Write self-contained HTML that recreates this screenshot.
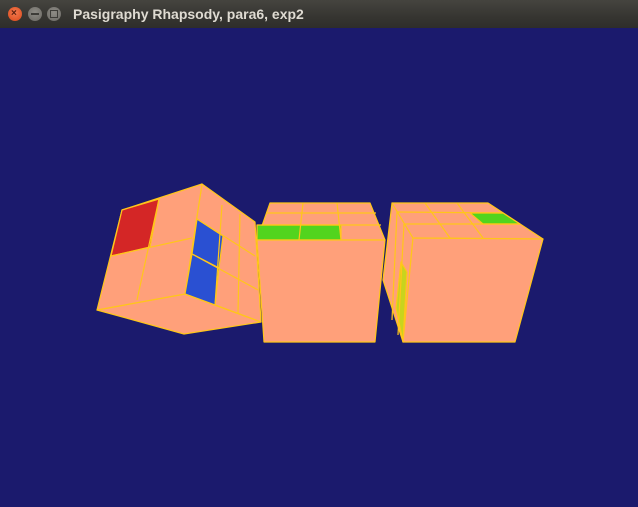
<!DOCTYPE html>
<html><head><style>
html,body{margin:0;padding:0;width:638px;height:507px;overflow:hidden;background:#1b1a6d}
#tb{position:absolute;left:0;top:0;width:638px;height:28px;background:linear-gradient(#45443f,#363531 60%,#2e2d2a);}
#t{position:absolute;left:73px;top:6px;font:bold 14px "Liberation Sans",sans-serif;color:#dfdbd2}
.b{position:absolute;top:7px;width:14px;height:14px;border-radius:50%}
</style></head><body>
<div id="tb">
<div class="b" style="left:8px;background:radial-gradient(circle at 50% 40%,#f37a4f,#d9481a);"></div>
<div class="b" style="left:28px;background:radial-gradient(circle at 50% 40%,#8e8c86,#6a6863);"></div>
<div class="b" style="left:47px;background:radial-gradient(circle at 50% 40%,#8e8c86,#6a6863);"></div>
<div style="position:absolute;left:11px;top:8px;font:bold 10px 'Liberation Sans',sans-serif;color:#5a2010">×</div>
<div style="position:absolute;left:31px;top:13px;width:8px;height:2px;background:#3d3c38"></div>
<div style="position:absolute;left:50px;top:10px;width:6px;height:6px;border:1px solid #3d3c38"></div>
<div id="t">Pasigraphy Rhapsody, para6, exp2</div>
</div>
<svg width="638" height="507" style="position:absolute;left:0;top:0" stroke="#ffc61a" stroke-width="1.2" stroke-linejoin="round">
<polygon points="97,310 185,294 261,322 184,334" fill="#ffa07a"/>
<polygon points="202,184 255,222 261,322 185,294" fill="#ffa07a"/>
<polygon points="122,210 202,184 185,294 97,310" fill="#ffa07a"/>
<polygon points="122,210 159,199 150,247 111,256" fill="#d42626"/>
<polygon points="197,219 223,236 219,268 192,254" fill="#2a50d2"/>
<polygon points="192,254 219,268 215,305 185,294" fill="#2a50d2"/>
<line x1="159" y1="199" x2="137" y2="300"/>
<line x1="111" y1="256" x2="192" y2="238"/>
<line x1="222" y1="205" x2="215" y2="305"/>
<line x1="240" y1="214" x2="238" y2="314"/>
<line x1="197" y1="219" x2="255" y2="256"/>
<line x1="192" y1="254" x2="258" y2="290"/>
<line x1="215" y1="305" x2="261" y2="322"/>
<polygon points="270,203 370,203 385,240 257,240" fill="#ffa07a"/>
<polygon points="257,225 341,225 341,240 257,240" fill="#52d41e"/>
<polygon points="257,240 385,240 375,342 264,342" fill="#ffa07a"/>
<line x1="266" y1="213" x2="376" y2="213"/>
<line x1="261" y1="225" x2="381" y2="225"/>
<line x1="303" y1="203" x2="299" y2="240"/>
<line x1="337" y1="203" x2="341" y2="240"/>
<polygon points="392,203 413,238 403,342 383,280" fill="#ffa07a"/>
<polygon points="401,262 407,272 403,342 396,308" fill="#c8d41e"/>
<polygon points="392,203 488,203 543,239 413,238" fill="#ffa07a"/>
<polygon points="470,213 503,213 520,224 483,224" fill="#52d41e"/>
<polygon points="413,238 543,239 515,342 403,342" fill="#ffa07a"/>
<line x1="397" y1="212" x2="503" y2="213"/>
<line x1="404" y1="224" x2="520" y2="224"/>
<line x1="425" y1="203" x2="450" y2="238"/>
<line x1="457" y1="203" x2="483" y2="238"/>
<line x1="397" y1="212" x2="392" y2="320"/>
<line x1="404" y1="224" x2="398" y2="335"/>
</svg>
</body></html>
